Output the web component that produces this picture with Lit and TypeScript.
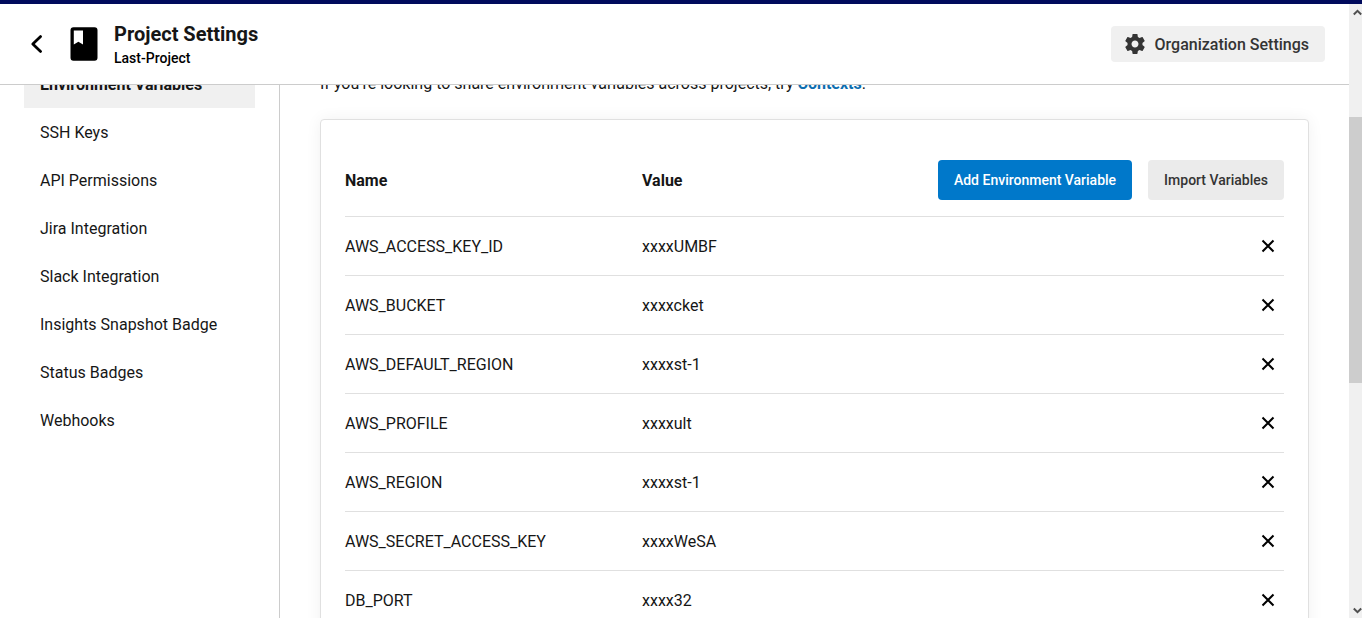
import { LitElement, html, css } from "lit";
import { customElement, state } from "lit/decorators.js";

interface EnvVar {
  name: string;
  value: string;
}

const NAV = [
  "Environment Variables",
  "SSH Keys",
  "API Permissions",
  "Jira Integration",
  "Slack Integration",
  "Insights Snapshot Badge",
  "Status Badges",
  "Webhooks",
];

@customElement("settings-header")
export class SettingsHeader extends LitElement {
  static styles = css`
    :host {
      display: flex;
      align-items: center;
      justify-content: space-between;
      height: 80px;
      padding: 0 24px;
      background: #fff;
      border-bottom: 1px solid #ccc;
    }
    .left {
      display: flex;
      align-items: center;
    }
    .back {
      display: flex;
      width: 24px;
      height: 24px;
      margin-right: 22px;
    }
    .book {
      width: 28px;
      height: 34px;
      margin-right: 16px;
    }
    h1,
    p {
      margin: 0;
    }
    .title {
      font-size: 20px;
      line-height: 28px;
      font-weight: 700;
      color: #161616;
    }
    .project {
      font-size: 14px;
      line-height: 20px;
      font-weight: 500;
      color: #000;
    }
    .org {
      display: flex;
      align-items: center;
      gap: 8px;
      height: 36px;
      padding: 0 16px 0 12px;
      border-radius: 4px;
      background: #f0f0f0;
      color: #343434;
      font-size: 16px;
      font-weight: 500;
      text-decoration: none;
    }
  `;

  render() {
    return html`
      <div class="left">
        <a class="back" href="#" aria-label="Back">
          <svg width="24" height="24" viewBox="0 0 24 24" fill="none" stroke="#000" stroke-width="2.8" stroke-linecap="round" stroke-linejoin="round">
            <path d="M16.600 4.600 8.800 12l7.800 7.400" />
          </svg>
        </a>
        <svg class="book" viewBox="0 0 28 34" aria-hidden="true">
          <path d="M3.500 0.200h21a3 3 0 0 1 3 3v27.600a3 3 0 0 1-3 3h-21a3 3 0 0 1-3-3v-27.600a3 3 0 0 1 3-3zM3.800 3.400v14l4.600-2.600 4.600 2.600v-14z" />
        </svg>
        <div>
          <h1 class="title">Project Settings</h1>
          <p class="project">Last-Project</p>
        </div>
      </div>
      <a class="org" href="#">
        <svg width="24" height="24" viewBox="0 0 24 24" fill="#343434" aria-hidden="true">
          <path d="M19.430 12.980c.040-.320.070-.640.070-.980s-.030-.660-.070-.980l2.110-1.650c.190-.150.240-.420.120-.640l-2-3.460c-.120-.220-.390-.300-.610-.220l-2.490 1c-.520-.400-1.080-.730-1.690-.980l-.380-2.650C14.460 2.180 14.250 2 14 2h-4c-.250 0-.460.180-.490.420l-.380 2.650c-.610.250-1.170.590-1.690.980l-2.490-1c-.230-.090-.490 0-.610.220l-2 3.460c-.130.220-.070.490.120.640l2.110 1.650c-.040.320-.070.650-.070.980s.030.660.070.980l-2.110 1.650c-.190.150-.240.420-.120.640l2 3.460c.120.220.390.300.610.220l2.490-1c.520.400 1.080.730 1.690.980l.380 2.650c.030.240.240.420.490.420h4c.250 0 .460-.180.490-.420l.380-2.650c.610-.250 1.170-.590 1.690-.980l2.490 1c.230.090.490 0 .610-.220l2-3.460c.120-.220.070-.490-.120-.640l-2.110-1.650zM12 15.500c-1.930 0-3.500-1.570-3.500-3.500s1.570-3.500 3.500-3.500 3.500 1.570 3.500 3.500-1.570 3.500-3.500 3.500z" />
        </svg>
        Organization Settings
      </a>
    `;
  }
}

@customElement("env-table")
export class EnvTable extends LitElement {
  static styles = css`
    :host {
      display: block;
      padding: 40px 24px 24px;
      border: 1px solid #e0e0e0;
      border-radius: 4px;
      background: #fff;
      box-shadow: 0 0 16px rgba(0, 0, 0, 0.06);
    }
    table {
      width: 100%;
      table-layout: fixed;
      border-collapse: separate;
      border-spacing: 0;
    }
    .actions-col {
      width: 345px;
    }
    th,
    td {
      padding: 0;
      text-align: left;
      border-bottom: 1px solid #e0e0e0;
    }
    th {
      height: 40px;
      padding-bottom: 16px;
      font-weight: 700;
    }
    td {
      height: 58px;
    }
    .actions {
      display: flex;
      justify-content: flex-end;
      gap: 16px;
    }
    button {
      border: 0;
      font-family: inherit;
      cursor: pointer;
    }
    .action {
      height: 40px;
      padding: 0 16px;
      border-radius: 4px;
      font-size: 14px;
      font-weight: 500;
      white-space: nowrap;
      background: #ebebeb;
      color: #343434;
    }
    .primary {
      background: #0078ca;
      color: #fff;
    }
    .remove {
      display: flex;
      margin-left: auto;
      padding: 4px;
      background: none;
    }
  `;

  @state() private vars: EnvVar[] = [
    { name: "AWS_ACCESS_KEY_ID", value: "xxxxUMBF" },
    { name: "AWS_BUCKET", value: "xxxxcket" },
    { name: "AWS_DEFAULT_REGION", value: "xxxxst-1" },
    { name: "AWS_PROFILE", value: "xxxxult" },
    { name: "AWS_REGION", value: "xxxxst-1" },
    { name: "AWS_SECRET_ACCESS_KEY", value: "xxxxWeSA" },
    { name: "DB_PORT", value: "xxxx32" },
  ];

  private remove(item: EnvVar) {
    this.vars = this.vars.filter((v) => v !== item);
  }

  render() {
    return html`
      <table>
        <colgroup>
          <col />
          <col />
          <col class="actions-col" />
        </colgroup>
        <thead>
          <tr>
            <th scope="col">Name</th>
            <th scope="col">Value</th>
            <th>
              <div class="actions">
                <button class="action primary" type="button">Add Environment Variable</button>
                <button class="action" type="button">Import Variables</button>
              </div>
            </th>
          </tr>
        </thead>
        <tbody>
          ${this.vars.map(
            (v) => html`
              <tr>
                <td>${v.name}</td>
                <td>${v.value}</td>
                <td>
                  <button class="remove" type="button" aria-label="Remove ${v.name}" @click=${() => this.remove(v)}>
                    <svg width="24" height="24" viewBox="0 0 24 24" fill="none" stroke="#000" stroke-width="2">
                      <path d="M6.500 6.500l11 11M17.500 6.500l-11 11" />
                    </svg>
                  </button>
                </td>
              </tr>
            `
          )}
        </tbody>
      </table>
    `;
  }
}

@customElement("app-root")
export class AppRoot extends LitElement {
  static styles = css`
    :host {
      display: flex;
      flex-direction: column;
      height: 100vh;
      box-sizing: border-box;
      overflow: hidden;
      border-top: 4px solid #000a5c;
      background: #fff;
      color: #161616;
      font-family: Roboto, "Liberation Sans", sans-serif;
      font-size: 16px;
      line-height: 25px;
    }
    .frame {
      flex: 1;
      min-height: 0;
      display: flex;
    }
    .page {
      flex: 1;
      min-width: 0;
      display: flex;
      flex-direction: column;
    }
    .viewport {
      flex: 1;
      min-height: 0;
      overflow: hidden;
    }
    /* The page opens part-way down its scroll range. */
    .scrolled {
      display: flex;
      min-height: 100%;
      margin-top: -25px;
      padding-bottom: 25px;
    }
    nav {
      flex: none;
      width: 231px;
      padding: 0 24px;
      border-right: 1px solid #ccc;
    }
    .item {
      display: block;
      padding: 12px 16px 11px;
      color: inherit;
      text-decoration: none;
    }
    .current {
      background: #f0f0f0;
      font-weight: 700;
    }
    main {
      flex: 1;
      min-width: 0;
      padding: 11px 40px 40px;
    }
    .intro {
      margin: 0 0 23px;
    }
    .intro a {
      color: #0d6eb0;
      font-weight: 700;
      text-decoration: none;
    }
    .scrollbar {
      flex: none;
      display: grid;
      grid-template-rows: 113fr 266fr 235fr;
      width: 13px;
      background: #f0f0f0;
      overflow: hidden;
    }
    .thumb {
      background: #cdcdcd;
    }
    .arrow {
      display: block;
      width: 17px;
      height: 17px;
    }
    .down {
      align-self: end;
    }
  `;

  render() {
    return html`
      <div class="frame">
        <div class="page">
          <settings-header></settings-header>
          <div class="viewport">
            <div class="scrolled">
              <nav aria-label="Project settings">
                ${NAV.map((n, i) => html`<a class="item ${i === 0 ? "current" : ""}" href="#">${n}</a>`)}
              </nav>
              <main>
                <p class="intro">
                  If you’re looking to share environment variables across projects, try <a href="#">Contexts</a>.
                </p>
                <env-table></env-table>
              </main>
            </div>
          </div>
        </div>
        <div class="scrollbar" aria-hidden="true">
          <svg class="arrow" viewBox="0 0 17 17" fill="none" stroke="#505050" stroke-width="2">
            <path d="M4.800 10.500l3.700-3.700 3.700 3.700" />
          </svg>
          <div class="thumb"></div>
          <svg class="arrow down" viewBox="0 0 17 17" fill="none" stroke="#505050" stroke-width="2">
            <path d="M4.800 7.500l3.700 3.700 3.700-3.700" />
          </svg>
        </div>
      </div>
    `;
  }
}
